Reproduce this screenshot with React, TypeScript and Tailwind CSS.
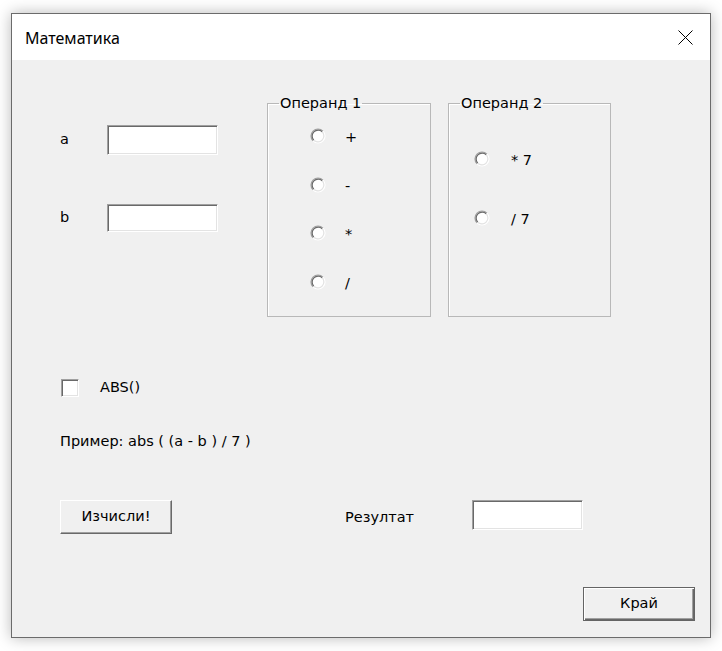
const sunken =
  'border border-t-[#a0a0a0] border-l-[#a0a0a0] border-r-white border-b-white bg-white shadow-[inset_1px_1px_0_#696969,inset_-1px_-1px_0_#e3e3e3]'

function TextBox({ className = '' }: { className?: string }) {
  return <div className={`${sunken} ${className}`} />
}

function Radio() {
  return (
    <svg width="16" height="16" viewBox="0 0 16 16" className="shrink-0">
      <circle cx="8" cy="8" r="6.5" fill="#ffffff" />
      <path d="M3.05 12.95 A7 7 0 0 1 12.95 3.05" fill="none" stroke="#a0a0a0" strokeWidth="1.2" />
      <path d="M3.76 12.24 A6 6 0 0 1 12.24 3.76" fill="none" stroke="#6a6a6a" strokeWidth="1.2" />
      <path d="M12.95 3.05 A7 7 0 0 1 3.05 12.95" fill="none" stroke="#ffffff" strokeWidth="1.2" />
      <path d="M12.24 3.76 A6 6 0 0 1 3.76 12.24" fill="none" stroke="#e3e3e3" strokeWidth="1.2" />
    </svg>
  )
}

function RadioRow({ label, gap }: { label: string; gap: string }) {
  return (
    <div className={`flex items-center h-[16px] ${gap}`}>
      <Radio />
      <span className="leading-none pt-[3px]">{label}</span>
    </div>
  )
}

function Button({ label, isDefault = false }: { label: string; isDefault?: boolean }) {
  return (
    <div
      className={`w-[112px] h-[34px] flex items-center justify-center bg-[#f0f0f0] ${
        isDefault
          ? 'border border-[#646464] shadow-[inset_1px_1px_0_#ffffff,inset_-1px_-1px_0_#696969,inset_-2px_-2px_0_#a0a0a0]'
          : 'border border-t-white border-l-white border-r-[#696969] border-b-[#696969] shadow-[inset_-1px_-1px_0_#a0a0a0]'
      }`}
    >
      {label}
    </div>
  )
}

export default function App() {
  return (
    <div className="w-[722px] h-[651px] bg-white pt-[13px] pl-[11px]">
      <div
        className="w-[700px] h-[625px] border border-[#6b6b6b] flex flex-col shadow-[0_0_14px_rgba(0,0,0,0.28)] text-black"
        style={{ fontFamily: '"DejaVu Sans", Tahoma, sans-serif' }}
      >
        {/* title bar */}
        <div className="h-[46px] bg-white flex items-center justify-between pl-[13px] pr-[17px] shrink-0">
          <span className="text-[16px] pt-[2px]" style={{ fontFamily: '"Noto Sans", sans-serif' }}>
            Математика
          </span>
          <svg width="15" height="15" viewBox="0 0 15 15">
            <path d="M0.5 0.5 L14.5 14.5 M14.5 0.5 L0.5 14.5" stroke="#000" strokeWidth="1" />
          </svg>
        </div>

        {/* form body */}
        <div className="flex-1 bg-[#f0f0f0] pl-[48px] text-[14.5px] flex flex-col">
          <div className="flex mt-[35px]">
            <div className="w-[207px] flex flex-col pt-[30px]">
              <div className="flex items-center">
                <span className="w-[47px]">a</span>
                <TextBox className="w-[111px] h-[30px]" />
              </div>
              <div className="flex items-center mt-[49px]">
                <span className="w-[47px]">b</span>
                <TextBox className="w-[111px] h-[28px]" />
              </div>
            </div>

            <fieldset className="w-[164px] h-[222px] border border-[#b8b8b8] shadow-[inset_1px_1px_0_#ffffff]">
              <legend className="ml-[11px] px-[1px] leading-[17px]">Операнд 1</legend>
              <div className="flex flex-col pl-[42px] pt-[16px] gap-[32.5px]">
                <RadioRow label="+" gap="gap-[19px]" />
                <RadioRow label="-" gap="gap-[19px]" />
                <RadioRow label="*" gap="gap-[19px]" />
                <RadioRow label="/" gap="gap-[19px]" />
              </div>
            </fieldset>

            <fieldset className="w-[163px] h-[222px] ml-[17px] border border-[#b8b8b8] shadow-[inset_1px_1px_0_#ffffff]">
              <legend className="ml-[11px] px-[1px] leading-[17px]">Операнд 2</legend>
              <div className="flex flex-col pl-[25px] pt-[39px] gap-[43px]">
                <RadioRow label="* 7" gap="gap-[21px]" />
                <RadioRow label="/ 7" gap="gap-[21px]" />
              </div>
            </fieldset>
          </div>

          <div className="flex items-center mt-[60px]">
            <div className={`${sunken} w-[18px] h-[18px] ml-[1px]`} />
            <span className="ml-[21px]">ABS()</span>
          </div>

          <div className="mt-[34px] leading-[17px]">Пример: abs ( (a - b ) / 7 )</div>

          <div className="flex items-start mt-[50px]">
            <Button label="Изчисли!" />
            <span className="w-[127px] ml-[173px] mt-[7px]">Резултат</span>
            <TextBox className="w-[111px] h-[30px]" />
          </div>

          <div className="flex justify-end mt-[53px] pr-[15px]">
            <Button label="Край" isDefault />
          </div>
        </div>
      </div>
    </div>
  )
}
